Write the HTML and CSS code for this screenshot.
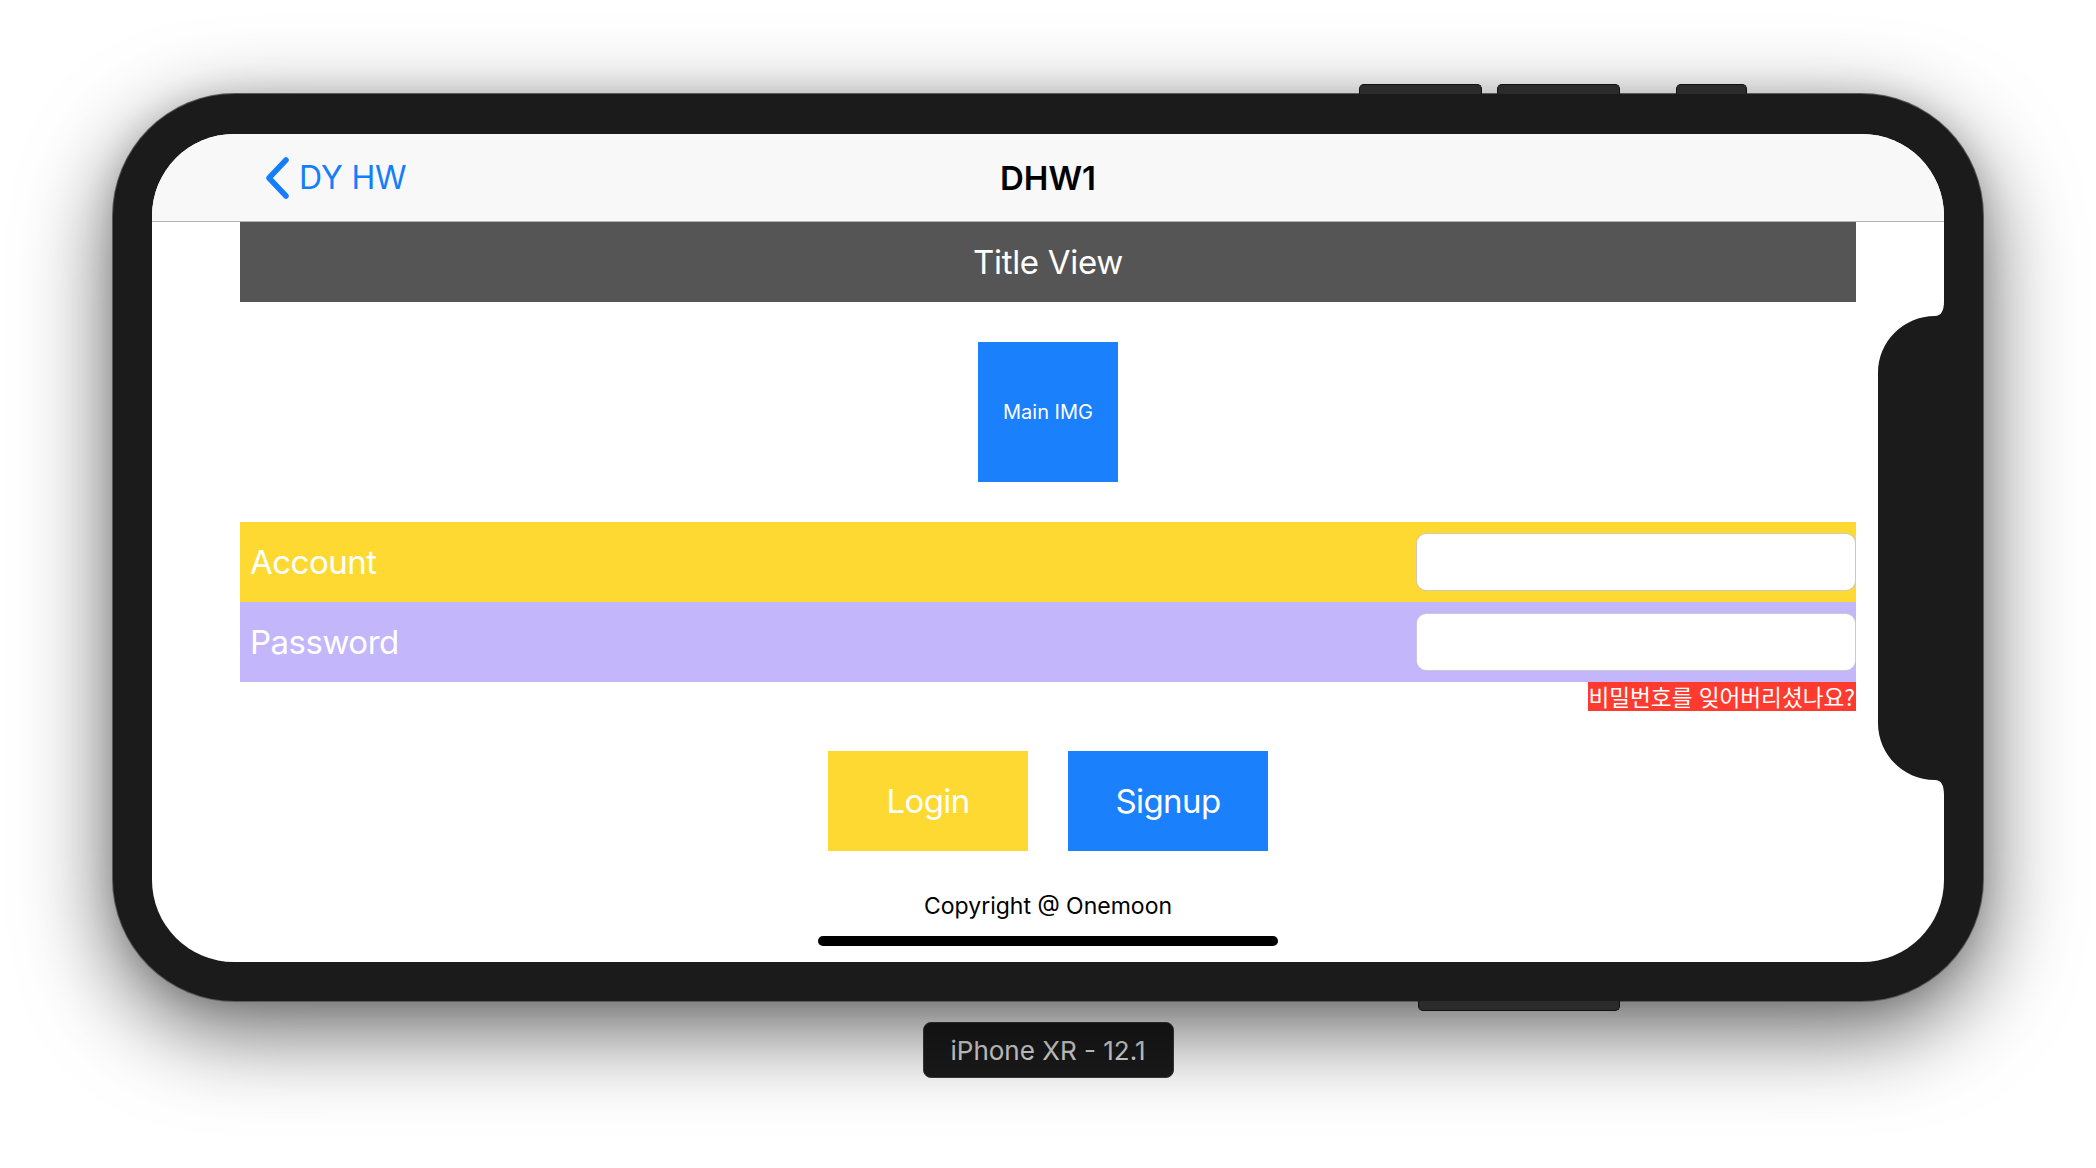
FILE: index.html
```html
<!DOCTYPE html>
<html lang="ko">
<head>
<meta charset="utf-8">
<title>DHW1</title>
<link rel="stylesheet" href="styles.css">
</head>
<body>
<div class="stage">
  <div class="phone">
    <span class="side-btn side-top side-top-1"></span>
    <span class="side-btn side-top side-top-2"></span>
    <span class="side-btn side-top side-top-3"></span>
    <span class="side-btn side-bottom"></span>
    <div class="screen">
      <header class="navbar">
        <div class="nav-back">
          <svg class="chevron" width="26" height="42" viewBox="0 0 26 42"><path d="M22 3 L5 21 L22 39" fill="none" stroke="#157efb" stroke-width="5.5" stroke-linecap="round" stroke-linejoin="round"/></svg>
          <span class="nav-back-text">DY HW</span>
        </div>
        <div class="nav-title">DHW1</div>
        <div class="nav-spacer"></div>
      </header>
      <main class="content">
        <div class="title-view">Title View</div>
        <div class="main-img">Main IMG</div>
        <div class="field-row row-account">
          <span class="field-label">Account</span>
          <div class="field-input"></div>
        </div>
        <div class="field-row row-password">
          <span class="field-label">Password</span>
          <div class="field-input field-input-purple"></div>
        </div>
        <div class="forgot">비밀번호를 잊어버리셨나요?</div>
        <div class="buttons">
          <div class="btn btn-login">Login</div>
          <div class="btn btn-signup">Signup</div>
        </div>
        <div class="copyright">Copyright @ Onemoon</div>
      </main>
      <svg class="notch" width="70" height="510" viewBox="0 0 70 510"><path d="M70 7 Q70 22 61 22 C29.5 22 4 47.5 4 79 L4 429 C4 460.5 29.5 486 61 486 Q70 486 70 501 Z" fill="#1b1b1b"/></svg>
      <div class="home-indicator"></div>
    </div>
  </div>
  <div class="device-label">iPhone XR - 12.1</div>
</div>
</body>
</html>
```

FILE: styles.css
```css
* { box-sizing: border-box; }

html {
  margin: 0;
  padding: 0;
  background: #ffffff;
}

body {
  margin: 0;
  padding: 0;
  font-family: Inter, "Noto Sans", "Noto Sans CJK KR", sans-serif;
}

.stage {
  width: 2096px;
  height: 1168px;
  display: flex;
  flex-direction: column;
  align-items: center;
  padding-top: 94px;
  overflow: hidden;
}

.phone {
  position: relative;
  width: 1870px;
  height: 907px;
  padding: 40px 39px 39px 39px;
  background: #1b1b1b;
  border-radius: 122px;
  box-shadow: 0 0 0 1px #5a5a5a, 0 28px 90px rgba(0, 0, 0, 0.62), 0 0 30px rgba(0, 0, 0, 0.12);
}

.side-btn {
  position: absolute;
  height: 10px;
  background: #2b2b2b;
  border: 1px solid #111;
}
.side-top {
  top: -10px;
  border-bottom: none;
  border-radius: 5px 5px 0 0;
}
.side-top-1 { left: 1246px; width: 123px; }
.side-top-2 { left: 1384px; width: 123px; }
.side-top-3 { left: 1563px; width: 71px; }
.side-bottom {
  left: 1305px;
  width: 202px;
  top: 907px;
  border-top: none;
  border-radius: 0 0 5px 5px;
}

.screen {
  position: relative;
  width: 1792px;
  height: 828px;
  background: #ffffff;
  border-radius: 82px;
  overflow: hidden;
  display: flex;
  flex-direction: column;
}

.navbar {
  flex: none;
  height: 88px;
  background: #f8f8f8;
  border-bottom: 1px solid #b4b4b4;
  display: grid;
  grid-template-columns: 1fr auto 1fr;
  align-items: center;
  padding: 0 112px;
}

.nav-back {
  display: flex;
  align-items: center;
  gap: 9px;
  color: #157efb;
}

.chevron { display: block; margin-top: 1px; }

.nav-back-text {
  font-size: 32px;
  letter-spacing: -0.1px;
}

.nav-title {
  font-size: 33px;
  font-weight: 600;
  color: #000;
}

.content {
  flex: 1;
  display: flex;
  flex-direction: column;
  padding: 0 88px;
}

.title-view {
  height: 80px;
  background: #555555;
  color: #ffffff;
  font-size: 33px;
  letter-spacing: -0.3px;
  display: flex;
  align-items: center;
  justify-content: center;
}

.main-img {
  width: 140px;
  height: 140px;
  margin: 40px auto;
  background: #1a80fc;
  color: #ffffff;
  font-size: 20px;
  display: flex;
  align-items: center;
  justify-content: center;
}

.field-row {
  height: 80px;
  display: flex;
  align-items: center;
  justify-content: space-between;
  padding-left: 10px;
}

.row-account { background: #fdd932; }
.row-password { background: #c3b6fa; }

.field-label {
  color: #ffffff;
  font-size: 33px;
  letter-spacing: -0.5px;
}

.field-input {
  width: 440px;
  height: 58px;
  background: #ffffff;
  border: 1px solid rgba(120, 100, 40, 0.35);
  border-radius: 10px;
}

.field-input-purple {
  border-color: rgba(80, 70, 120, 0.3);
}

.forgot {
  align-self: flex-end;
  height: 29px;
  line-height: 29px;
  background: #ff3b30;
  color: #ffffff;
  font-family: "Noto Sans CJK KR", sans-serif;
  font-size: 22.6px;
  padding: 0 1px;
}

.buttons {
  display: flex;
  justify-content: center;
  gap: 40px;
  margin-top: 40px;
}

.btn {
  width: 200px;
  height: 100px;
  display: flex;
  align-items: center;
  justify-content: center;
  color: #ffffff;
  font-size: 33px;
  letter-spacing: -0.6px;
}

.btn-login { background: #fdd932; }
.btn-signup { background: #1a80fc; }

.copyright {
  margin-top: 41px;
  text-align: center;
  font-size: 23px;
  line-height: 28px;
  color: #000;
}

.notch {
  position: absolute;
  right: 0;
  top: 160px;
  display: block;
}

.home-indicator {
  position: absolute;
  left: 666px;
  bottom: 16px;
  width: 460px;
  height: 10px;
  border-radius: 5px;
  background: #000;
}

.device-label {
  margin-top: 21px;
  width: 251px;
  height: 56px;
  background: #1b1b1b;
  border: 1px solid #3c3c3c;
  border-radius: 8px;
  color: #e0e0e0;
  font-size: 26px;
  display: flex;
  align-items: center;
  justify-content: center;
}
```
